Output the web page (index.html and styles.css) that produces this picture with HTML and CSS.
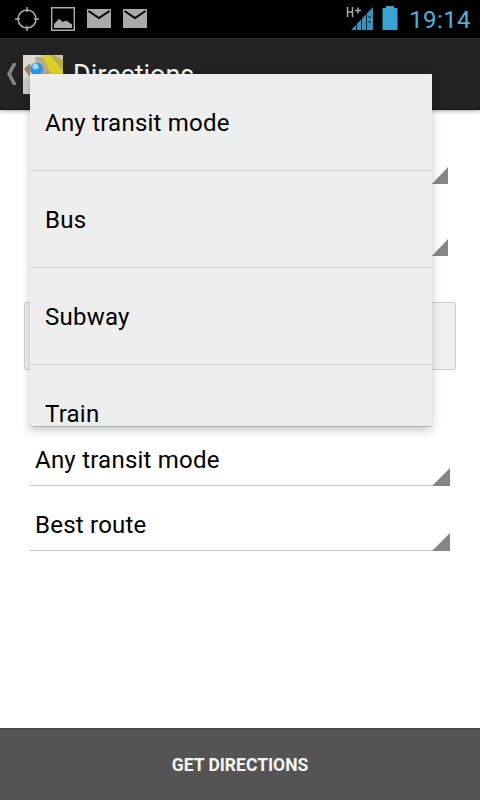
FILE: index.html
```
<!DOCTYPE html>
<html lang="en">
<head>
<meta charset="utf-8">
<title>Directions</title>
<link rel="stylesheet" href="styles.css">
</head>
<body>
<div class="screen">
  <header class="status">
    <div class="notifications">
      <svg width="24" height="24" viewBox="0 0 24 24" fill="none" stroke="#aaa" stroke-width="1.500"><circle cx="12" cy="12" r="9"/><path d="M12 0v5M12 19v5M0 12h5M19 12h5"/></svg>
      <svg width="24" height="24" viewBox="0 0 24 24"><path d="M.7.7h22.6v22.6H.7z" fill="none" stroke="#aaa" stroke-width="1.4"/><path d="M3 21v-4l5-5 4 3 3-1.500 6 4V21z" fill="#aaa"/></svg>
      <svg width="24" height="20" viewBox="0 0 24 20"><path d="M0 0h24v19H0z" fill="#aaa"/><path d="M1.500 2 12 9 22.500 2" fill="none" stroke="#000" stroke-width="2"/></svg>
      <svg width="24" height="20" viewBox="0 0 24 20"><path d="M0 0h24v19H0z" fill="#aaa"/><path d="M1.500 2 12 9 22.500 2" fill="none" stroke="#000" stroke-width="2"/></svg>
    </div>
    <div class="system">
      <svg class="signal" width="28" height="26" viewBox="0 0 28 26"><path d="M5 25 27 2v23z" fill="#3793bd"/><path d="M10.500 19v6M15.500 14v11M20.500 9v16M22 12h3M22 17h3" stroke="#08222f" stroke-width="1"/><path d="M1.500 2v10M6.500 2v10M1.500 7h5M9 5.500h6M12 2.500v6" fill="none" stroke="#aaa" stroke-width="1.500"/></svg>
      <svg class="battery" width="16" height="24" viewBox="0 0 16 24"><path d="M4 0h8v2h3.500v22H.5V2H4z" fill="#3aa3d2"/></svg>
      <time class="clock">19:14</time>
    </div>
  </header>
  <div class="actionbar">
    <svg class="back" width="10" height="22" viewBox="0 0 10 22"><path d="M9 0 3 11l6 11" fill="none" stroke="#858585" stroke-width="3.500"/></svg>
    <svg class="logo" width="40" height="39" viewBox="0 0 40 39">
      <path d="M0 0h40v39H0z" fill="#cfcdc8"/><path d="M0 0h19l-8 7 6 10L0 24z" fill="#ddd9ce"/><path d="M1 14 7 8v14z" fill="#a4805e"/><path d="M12 2h9l8 17H17z" fill="#b7a990"/><path d="M19 0h9l12 16v9L28 19z" fill="#ddd02a"/><path d="M27 0h13v16z" fill="#b7ae41"/><path d="M30 0h10v5z" fill="#c9c7a8"/><circle cx="13.500" cy="14" r="6.500" fill="#2e96e2"/><circle cx="12.500" cy="11.500" r="3" fill="#9bd8fb"/>
    </svg>
    <h1 class="title">Directions</h1>
  </div>
  <main class="form">
    <div class="field short"></div>
    <div class="field short"></div>
    <div class="modes"></div>
    <div class="field">Any transit mode</div>
    <div class="field">Best route</div>
  </main>
  <button class="submit">GET DIRECTIONS</button>
  <ul class="menu">
    <li>Any transit mode</li>
    <li>Bus</li>
    <li>Subway</li>
    <li>Train</li>
  </ul>
</div>
</body>
</html>
```
FILE: styles.css
```
* { box-sizing: border-box; }
body { margin: 0; font-family: Roboto, "Liberation Sans", sans-serif; color: #000; }
svg { display: block; flex: none; }
.screen { position: relative; width: 480px; height: 800px; display: flex; flex-direction: column; overflow: hidden; background: #fefefe; }
.status { height: 38px; flex: none; background: #000; display: flex; justify-content: space-between; padding: 0 9px 0 15px; }
.notifications { display: flex; align-items: center; gap: 12px; }
.system { display: flex; align-items: center; }
.signal { margin-top: -2px; margin-right: 8px; }
.battery { margin-top: -2px; margin-right: 11px; }
.clock { font-size: 24px; line-height: 38px; padding-top: 2px; letter-spacing: .4px; color: #4fb2de; font-weight: 400; }
.actionbar { height: 72px; flex: none; display: flex; align-items: center; background: #222; border-top: 1px solid #303030; border-bottom: 1px solid #141414; padding-left: 6px; box-shadow: 0 1px 4px rgba(0,0,0,.35); }
.logo { margin-left: 7px; }
.title { margin: 2px 0 0 10px; font-size: 27px; font-weight: 400; color: #f4f4f4; line-height: 32px; }
.form { flex: 1; padding: 9px 30px 0; }
.field { position: relative; height: 65px; padding: 13px 5px 0; border-bottom: 1px solid #c6c6c6; font-size: 24px; line-height: 52px; letter-spacing: .23px; }
.field::after { content: ""; position: absolute; right: 0; bottom: -1px; width: 18px; height: 18px; background: #858585; clip-path: polygon(100% 0, 100% 100%, 0 100%); }
.field.short { margin-right: 2px; }
.field.short::after { width: 16px; height: 17px; }
.field.short + .field.short { margin-top: 7px; }
.modes { height: 68px; margin: 46px -6px 51px; border: 1px solid #cfcfcf; border-radius: 2px; background: #f0f0f0; }
.submit { flex: none; height: 72px; border: 0; border-top: 1px solid #444; padding: 0; background: #545454; color: #f4f4f4; font: 700 17.500px/24px Roboto, "Liberation Sans", sans-serif; }
.menu { position: absolute; left: 30px; top: 74px; width: 402px; height: 353px; margin: 0; padding: 0; list-style: none; overflow: hidden; background: #eee; border-bottom: 1px solid #b5b5b5; border-radius: 0 0 2px 2px; box-shadow: 0 3px 8px rgba(0,0,0,.22); }
.menu li { height: 97px; padding-left: 15px; border-bottom: 1px solid #d5d5d5; font-size: 24px; line-height: 98px; letter-spacing: .23px; }
```
